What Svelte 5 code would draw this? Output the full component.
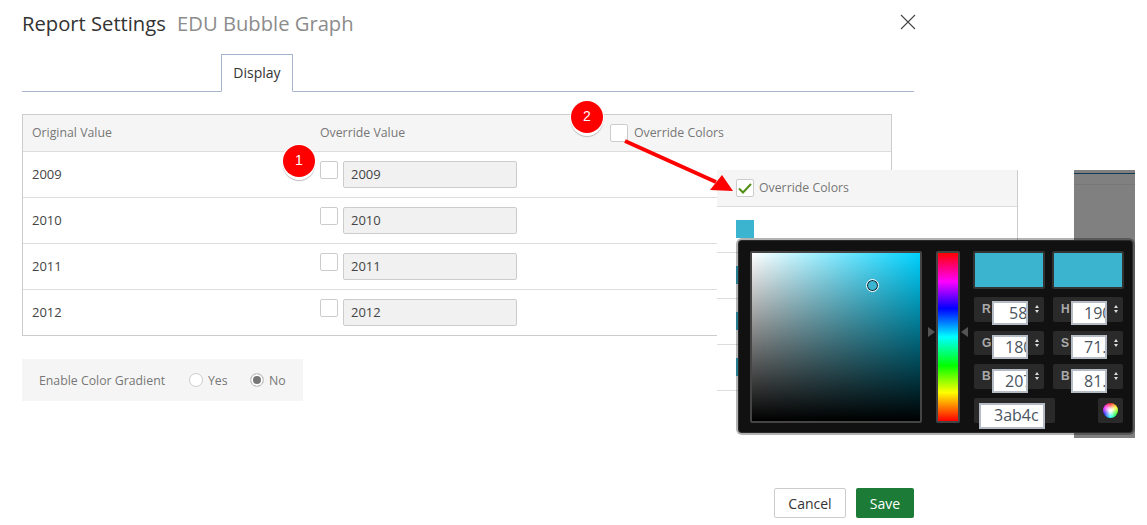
<script>
  const rows = ['2009', '2010', '2011', '2012'];
  const rgb = [
    { label: 'R', value: '58', pad: 15 },
    { label: 'G', value: '180', pad: 11 },
    { label: 'B', value: '207', pad: 11 }
  ];
  const hsb = [
    { label: 'H', value: '190', pad: 11 },
    { label: 'S', value: '71.9', pad: 11 },
    { label: 'B', value: '81.2', pad: 11 }
  ];
  const swatches = ['#3ab4cf', '#3ab4cf', '#3ab4cf', '#3ab4cf'];
</script>

<div class="page">
  <header class="head">
    <h2>Report Settings <span>EDU Bubble Graph</span></h2>
    <svg class="close" width="16" height="16" viewBox="0 0 16 16">
      <path d="M1 1 15 15M15 1 1 15" stroke="#444" stroke-width="1.1" fill="none" />
    </svg>
  </header>

  <div class="tabs"><div class="tab">Display</div></div>

  <div class="table">
    <div class="row top">
      <div class="c1">Original Value</div>
      <div class="c2">Override Value</div>
      <div class="c3"><span class="check"></span>Override Colors</div>
    </div>
    {#each rows as year}
      <div class="row">
        <div class="c1 year">{year}</div>
        <div class="c2 edit">
          <span class="check"></span>
          <div class="field">{year}</div>
        </div>
      </div>
    {/each}
  </div>

  <div class="gradient">
    <span class="grad-label">Enable Color Gradient</span>
    <span class="radio"></span><span class="opt">Yes</span>
    <span class="radio on"></span><span class="opt">No</span>
  </div>

  <footer class="foot">
    <button class="cancel">Cancel</button>
    <button class="save">Save</button>
  </footer>

  <div class="gray"><div class="gray-line"></div></div>

  <div class="second">
    <div class="second-head">
      <span class="check ticked">
        <svg width="16" height="14" viewBox="0 0 16 14">
          <path d="M2 7.5 6 11.5 14 3" stroke="#4f8f12" stroke-width="2" fill="none" />
        </svg>
      </span>
      Override Colors
    </div>
    {#each swatches as color}
      <div class="second-row"><span class="swatch" style:background={color}></span></div>
    {/each}
  </div>

  <div class="picker">
    <div class="square">
      <span class="marker"></span>
    </div>
    <div class="hue-wrap">
      <span class="tri left"></span>
      <div class="hue"></div>
      <span class="tri right"></span>
    </div>
    <div class="controls">
      <div class="color"></div>
      <div class="color"></div>
      <div class="col">
        {#each rgb as f}
          <div class="num">
            <b>{f.label}</b>
            <div class="box" style:padding-left="{f.pad}px">{f.value}</div>
            <i class="spin"></i>
          </div>
        {/each}
      </div>
      <div class="col">
        {#each hsb as f}
          <div class="num">
            <b>{f.label}</b>
            <div class="box" style:padding-left="{f.pad}px">{f.value}</div>
            <i class="spin"></i>
          </div>
        {/each}
      </div>
      <div class="hex"><div class="box hexbox">3ab4c</div></div>
      <div class="wheel"><span></span></div>
    </div>
  </div>

  <svg class="arrow" width="130" height="70" viewBox="0 0 130 70">
    <path d="M3 3 94 44" stroke="#f00" stroke-width="4" fill="none" />
    <path d="M111 53 88 52 100 37Z" fill="#f00" />
  </svg>

  <span class="badge one">1</span>
  <span class="badge two">2</span>
</div>

<style>
  :global(body) {
    margin: 0;
    background: #fff;
    font-family: "Open Sans", "Liberation Sans", sans-serif;
  }

  .page {
    position: relative;
    width: 1147px;
    height: 525px;
    overflow: hidden;
    padding: 0 22px;
    box-sizing: border-box;
  }

  .head {
    width: 894px;
    height: 54px;
    display: flex;
    justify-content: space-between;
    padding-top: 10px;
    box-sizing: border-box;
  }

  h2 {
    margin: 0;
    font-size: 20.2px;
    font-weight: 400;
    line-height: 27px;
    color: #333;
  }

  h2 span {
    margin-left: 6px;
    color: #8c8c8c;
  }

  .close {
    margin-top: 4px;
  }

  .tabs {
    width: 892px;
    height: 38px;
    box-sizing: border-box;
    border-bottom: 1px solid #a3b4cc;
    padding-left: 199px;
  }

  .tab {
    width: 72px;
    height: 38px;
    box-sizing: border-box;
    border: 1px solid #a3b4cc;
    border-bottom: 1px solid #fff;
    background: #fff;
    text-align: center;
    font-size: 14px;
    line-height: 36px;
    color: #333;
  }

  .table {
    width: 870px;
    margin-top: 22px;
    box-sizing: border-box;
    border: 1px solid #ccc;
  }

  .row {
    display: flex;
    height: 46px;
    box-sizing: border-box;
    border-top: 1px solid #ddd;
    font-size: 13px;
    color: #444;
  }

  .row.top {
    height: 36px;
    border-top: 0;
    padding-bottom: 2px;
    background: #f5f5f5;
    align-items: center;
    font-size: 12.3px;
    color: #777;
  }

  .c1 {
    width: 297px;
    padding-left: 9px;
    box-sizing: border-box;
  }

  .c2 {
    width: 290px;
  }

  .c3 {
    display: flex;
    align-items: center;
    gap: 6px;
  }

  .c3 .check {
    margin-top: 2px;
  }

  .year {
    line-height: 44px;
  }

  .edit {
    display: flex;
    gap: 5px;
    padding-top: 9px;
  }

  .check {
    display: inline-block;
    width: 18px;
    height: 18px;
    flex: none;
    box-sizing: border-box;
    border: 1px solid #ccc;
    border-radius: 2px;
    background: #fff;
  }

  .field {
    width: 174px;
    height: 27px;
    box-sizing: border-box;
    border: 1px solid #ccc;
    border-radius: 2px;
    background: #f1f1f1;
    padding-left: 7px;
    font-size: 13px;
    line-height: 25px;
    color: #444;
  }

  .gradient {
    display: flex;
    align-items: center;
    width: 281px;
    height: 42px;
    margin-top: 23px;
    padding-left: 17px;
    box-sizing: border-box;
    background: #f5f5f5;
    font-size: 12.3px;
    color: #777;
  }

  .grad-label {
    width: 150px;
    flex: none;
  }

  .radio {
    width: 14px;
    height: 14px;
    flex: none;
    box-sizing: border-box;
    border: 1px solid #ccc;
    border-radius: 50%;
    background: #fff;
  }

  .radio.on {
    background: #777;
    box-shadow: inset 0 0 0 2px #fff;
  }

  .opt {
    width: 42px;
    margin-left: 5px;
    flex: none;
  }

  .opt:last-child {
    width: auto;
  }

  .foot {
    display: flex;
    justify-content: flex-end;
    gap: 10px;
    width: 892px;
    margin-top: 87px;
  }

  button {
    height: 30px;
    padding: 0;
    border-radius: 2px;
    font: 14px "Open Sans", "Liberation Sans", sans-serif;
  }

  .cancel {
    width: 72px;
    border: 1px solid #ccc;
    background: #fff;
    color: #333;
  }

  .save {
    width: 58px;
    border: 0;
    background: #1b7b37;
    color: #fff;
  }

  /* second screenshot pasted over the table */
  .gray {
    position: absolute;
    left: 1074px;
    top: 170px;
    width: 61px;
    height: 268px;
    background: #808080;
    border-top: 3px solid #7f7f7f;
    box-sizing: border-box;
  }

  .gray::before {
    content: "";
    display: block;
    height: 1px;
    background: #123a55;
  }

  .gray-line {
    height: 1px;
    margin-top: 10px;
    background: #777;
  }

  .second {
    position: absolute;
    left: 717px;
    top: 170px;
    width: 301px;
    background: #fff;
    border-right: 1px solid #ccc;
    box-sizing: border-box;
  }

  .second-head {
    display: flex;
    align-items: center;
    gap: 5px;
    height: 37px;
    padding: 0 0 1px 19px;
    box-sizing: border-box;
    background: #f5f5f5;
    border-bottom: 1px solid #ddd;
    font-size: 12.3px;
    color: #777;
  }

  .ticked {
    display: flex;
    align-items: center;
    justify-content: center;
  }

  .second-row {
    height: 46px;
    padding: 13px 0 0 19px;
    box-sizing: border-box;
    border-bottom: 1px solid #ddd;
  }

  .swatch {
    display: block;
    width: 18px;
    height: 18px;
  }

  .picker {
    position: absolute;
    left: 739px;
    top: 241px;
    width: 393px;
    height: 191px;
    display: flex;
    padding: 10px 8px 0 11px;
    box-sizing: border-box;
    background: #111;
    border-radius: 3px;
    box-shadow: 0 0 0 1px #2a2a2a, 0 0 0 3px rgba(0, 0, 0, 0.3);
    font-family: "Liberation Sans", sans-serif;
  }

  .square {
    position: relative;
    width: 172px;
    height: 172px;
    flex: none;
    box-sizing: border-box;
    border: 2px solid #444;
    border-radius: 2px;
    background:
      linear-gradient(to bottom, rgba(0, 0, 0, 0), #000),
      linear-gradient(to right, #fff, #00d2ff);
  }

  .marker {
    position: absolute;
    left: 114px;
    top: 26px;
    width: 13px;
    height: 13px;
    box-sizing: border-box;
    border-radius: 50%;
    border: 1px solid #fff;
    background: #3ab4cf;
    box-shadow: inset 0 0 0 1px #123;
  }

  .hue-wrap {
    position: relative;
    width: 24px;
    margin-left: 14px;
    flex: none;
  }

  .hue {
    width: 24px;
    height: 172px;
    box-sizing: border-box;
    border: 2px solid #444;
    border-radius: 2px;
    background: linear-gradient(to bottom, #f00, #f0f 17%, #00f 33%, #0ff 50%, #0f0 67%, #ff0 83%, #f00);
  }

  .tri {
    position: absolute;
    top: 76px;
    border-top: 5px solid transparent;
    border-bottom: 5px solid transparent;
  }

  .tri.left {
    left: -8px;
    border-left: 7px solid #555;
  }

  .tri.right {
    right: -8px;
    border-right: 7px solid #555;
  }

  .controls {
    display: grid;
    grid-template-columns: 72px 72px;
    grid-template-rows: 38px auto auto;
    align-content: start;
    column-gap: 7px;
    width: 151px;
    margin-left: 13px;
  }

  .color {
    box-sizing: border-box;
    border: 2px solid #333;
    border-radius: 2px;
    background: #3ab4cf;
  }

  .col {
    display: flex;
    flex-direction: column;
    gap: 9px;
    margin-top: 8px;
  }

  .num {
    position: relative;
    width: 70px;
    height: 25px;
    margin-left: 1px;
    border-radius: 2px;
    background: #2a2a2a;
  }

  .num:nth-child(2) {
    height: 24px;
  }

  .num b {
    position: absolute;
    left: 8px;
    top: 5px;
    font-size: 12px;
    color: #aaa;
  }

  .box {
    position: absolute;
    left: 18px;
    top: 4px;
    width: 36px;
    height: 24px;
    box-sizing: border-box;
    border: 2px solid #b5bcc5;
    background: #fff;
    overflow: hidden;
    white-space: nowrap;
    font: 16px/21px "Open Sans", sans-serif;
    color: #4a5560;
  }

  .num:nth-child(3) .box {
    top: 5px;
  }

  .spin {
    position: absolute;
    left: 61px;
    top: 8px;
    width: 0;
    height: 0;
    border-left: 2px solid transparent;
    border-right: 2px solid transparent;
    border-bottom: 3px solid #ddd;
  }

  .spin::after {
    content: "";
    position: absolute;
    left: -2px;
    top: 5px;
    border-left: 2px solid transparent;
    border-right: 2px solid transparent;
    border-top: 3px solid #ddd;
  }

  .hex {
    position: relative;
    width: 81px;
    height: 25px;
    margin: 9px 0 0 1px;
    border-radius: 2px;
    background: #2a2a2a;
  }

  .hexbox {
    left: 5px;
    top: 5px;
    width: 66px;
    height: 26px;
    padding-left: 13px;
  }

  .wheel {
    display: flex;
    align-items: center;
    justify-content: center;
    width: 25px;
    height: 25px;
    margin: 9px 0 0 46px;
    border-radius: 2px;
    background: #2a2a2a;
  }

  .wheel span {
    width: 15px;
    height: 15px;
    border-radius: 50%;
    background:
      radial-gradient(circle, #fff 10%, rgba(255, 255, 255, 0) 65%),
      conic-gradient(#f33, #ff3, #3f3, #3ff, #33f, #f3f, #f33);
  }

  .arrow {
    position: absolute;
    left: 622px;
    top: 138px;
  }

  .badge {
    position: absolute;
    width: 32px;
    height: 32px;
    border-radius: 50%;
    background: #f00;
    color: #fff;
    font: 14px/31px "Liberation Sans", sans-serif;
    text-align: center;
    box-shadow: 0 0 0 1px #fff, 0 3px 0 #fff, 0 4px 1px #bbb;
  }

  .one {
    left: 283px;
    top: 145px;
  }

  .two {
    left: 571px;
    top: 101px;
  }
</style>
